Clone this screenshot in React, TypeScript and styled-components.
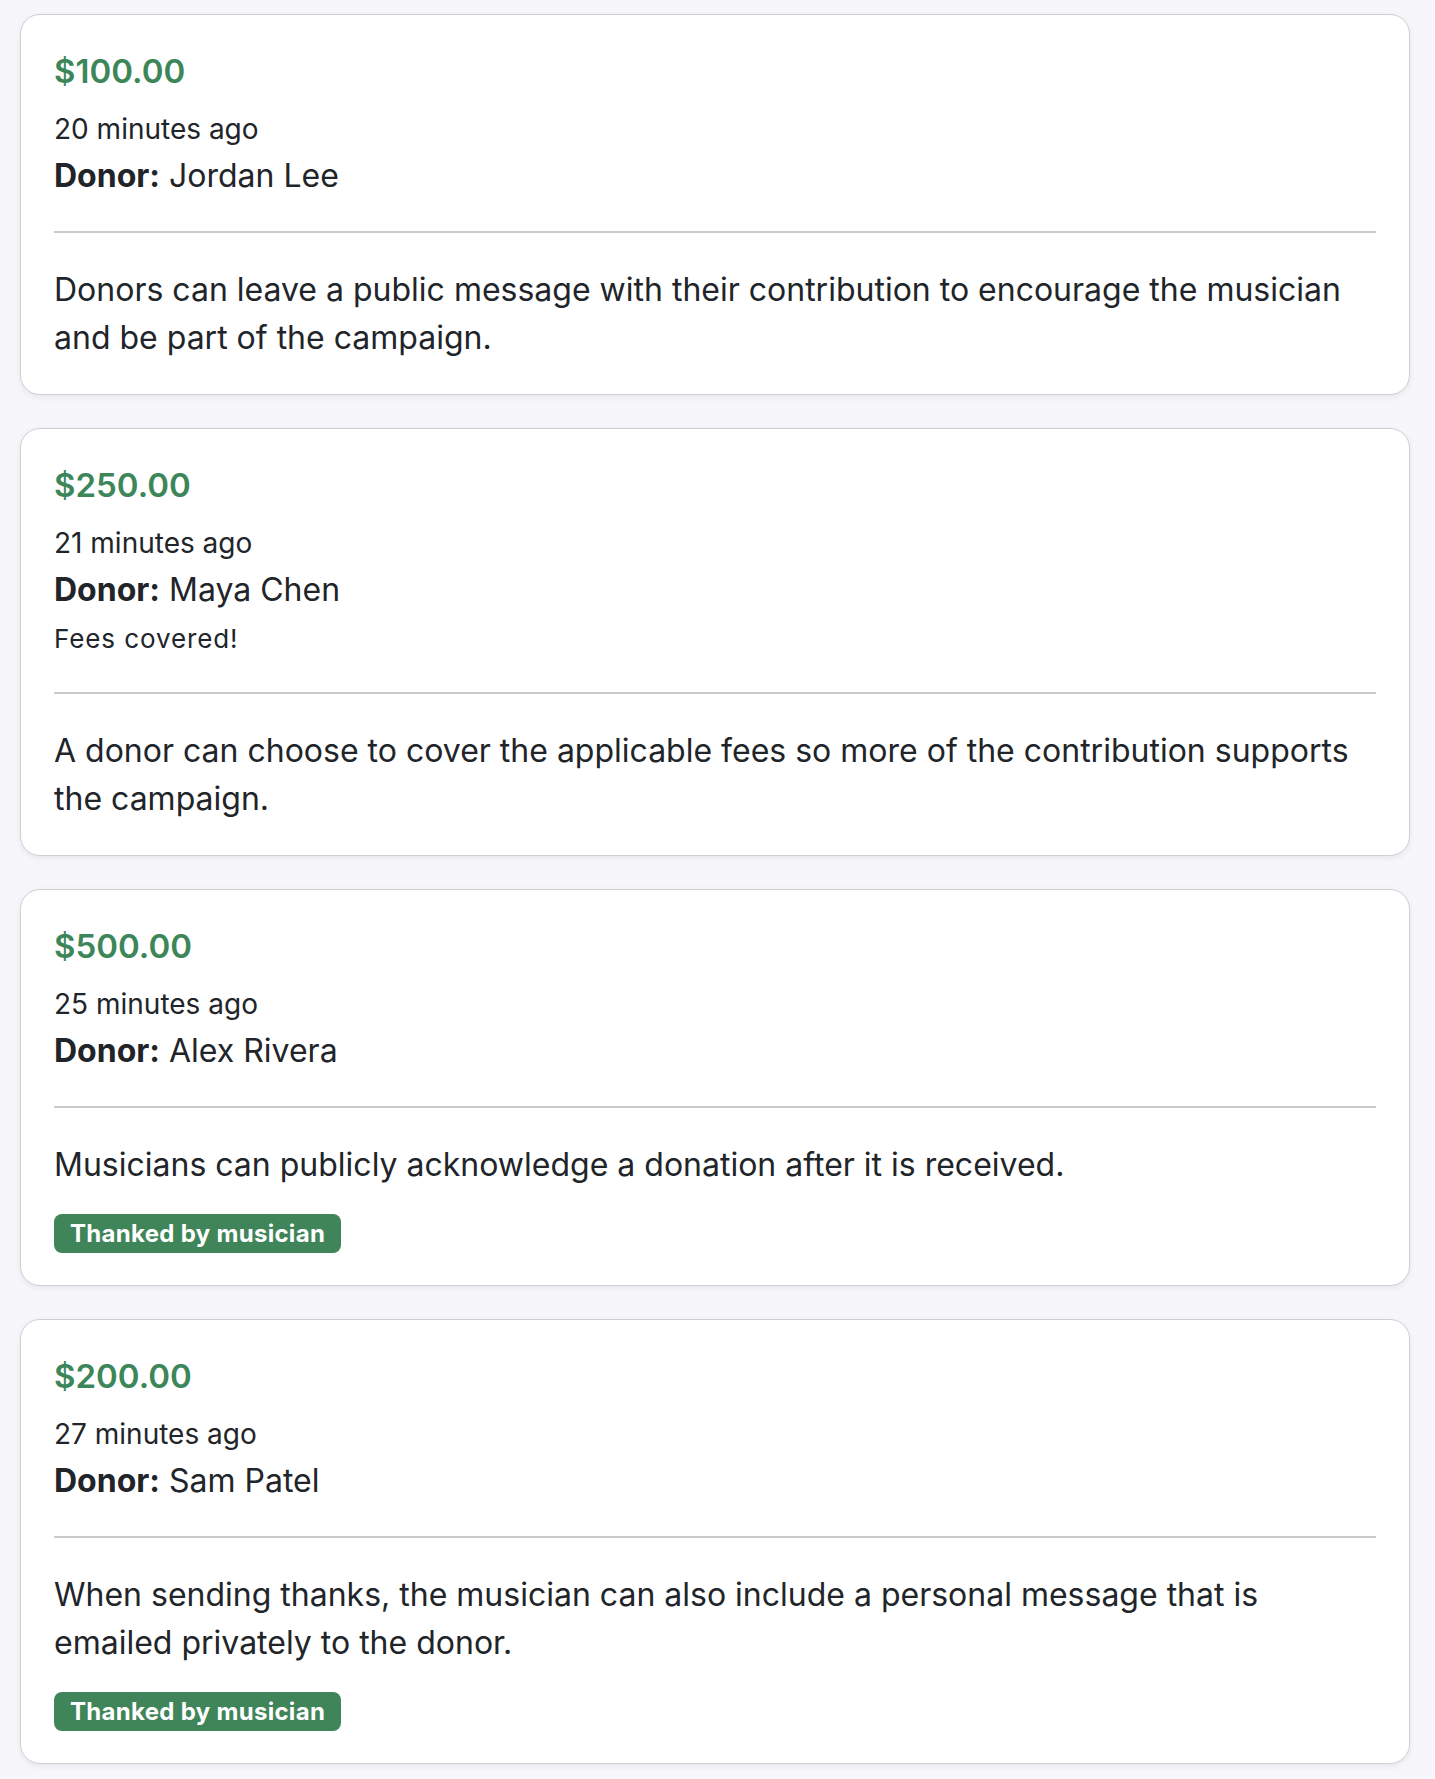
import React from "react";
import styled, { createGlobalStyle } from "styled-components";

const GlobalStyle = createGlobalStyle`
  html, body {
    margin: 0;
    padding: 0;
    background: #f7f6fb;
  }
  body {
    font-family: Inter, "Noto Sans", "Liberation Sans", sans-serif;
    color: #212529;
  }
  * { box-sizing: border-box; }
`;

const Page = styled.div`
  padding: 14px 25px 20px 20px;
  display: flex;
  flex-direction: column;
  gap: 33px;
`;

const Card = styled.article`
  background: #ffffff;
  border: 1px solid #d0d0d4;
  border-radius: 20px;
  padding: 33px 33px 32px 33px;
  box-shadow: 0 2px 6px rgba(0, 0, 0, 0.07);
  display: flex;
  flex-direction: column;
  align-items: flex-start;
`;

const Amount = styled.div`
  font-size: 33px;
  font-weight: 600;
  line-height: 46px;
  color: #3c8659;
`;

const Time = styled.div`
  margin-top: 12px;
  font-size: 28px;
  line-height: 46px;
  color: #212529;
`;

const DonorLine = styled.div`
  font-size: 32px;
  line-height: 48px;
  color: #212529;
  strong {
    font-weight: 700;
  }
`;

const Fees = styled.div`
  margin-top: 2px;
  font-size: 26px;
  line-height: 45px;
  letter-spacing: 0.9px;
  color: #212529;
`;

const Divider = styled.hr`
  align-self: stretch;
  border: 0;
  height: 2px;
  background: #cacaca;
  margin: 31px 0 33px 0;
`;

const Message = styled.p`
  margin: 0;
  font-size: 32px;
  line-height: 48px;
  color: #212529;
`;

const Badge = styled.span`
  margin-top: 25px;
  display: inline-block;
  background: #40855a;
  color: #ffffff;
  font-size: 24px;
  font-weight: 700;
  letter-spacing: 0.3px;
  height: 39px;
  line-height: 39px;
  padding: 0 16px;
  border-radius: 8px;
`;

type Donation = {
  amount: string;
  time: string;
  donor: string;
  feesCovered?: boolean;
  message: string;
  thanked?: boolean;
};

const donations: Donation[] = [
  {
    amount: "$100.00",
    time: "20 minutes ago",
    donor: "Jordan Lee",
    message:
      "Donors can leave a public message with their contribution to encourage the musician and be part of the campaign.",
  },
  {
    amount: "$250.00",
    time: "21 minutes ago",
    donor: "Maya Chen",
    feesCovered: true,
    message:
      "A donor can choose to cover the applicable fees so more of the contribution supports the campaign.",
  },
  {
    amount: "$500.00",
    time: "25 minutes ago",
    donor: "Alex Rivera",
    message: "Musicians can publicly acknowledge a donation after it is received.",
    thanked: true,
  },
  {
    amount: "$200.00",
    time: "27 minutes ago",
    donor: "Sam Patel",
    message:
      "When sending thanks, the musician can also include a personal message that is emailed privately to the donor.",
    thanked: true,
  },
];

export default function App() {
  return (
    <>
      <GlobalStyle />
      <Page>
        {donations.map((d) => (
          <Card key={d.amount + d.donor}>
            <Amount>{d.amount}</Amount>
            <Time>{d.time}</Time>
            <DonorLine>
              <strong>Donor:</strong> {d.donor}
            </DonorLine>
            {d.feesCovered && <Fees>Fees covered!</Fees>}
            <Divider />
            <Message>{d.message}</Message>
            {d.thanked && <Badge>Thanked by musician</Badge>}
          </Card>
        ))}
      </Page>
    </>
  );
}
